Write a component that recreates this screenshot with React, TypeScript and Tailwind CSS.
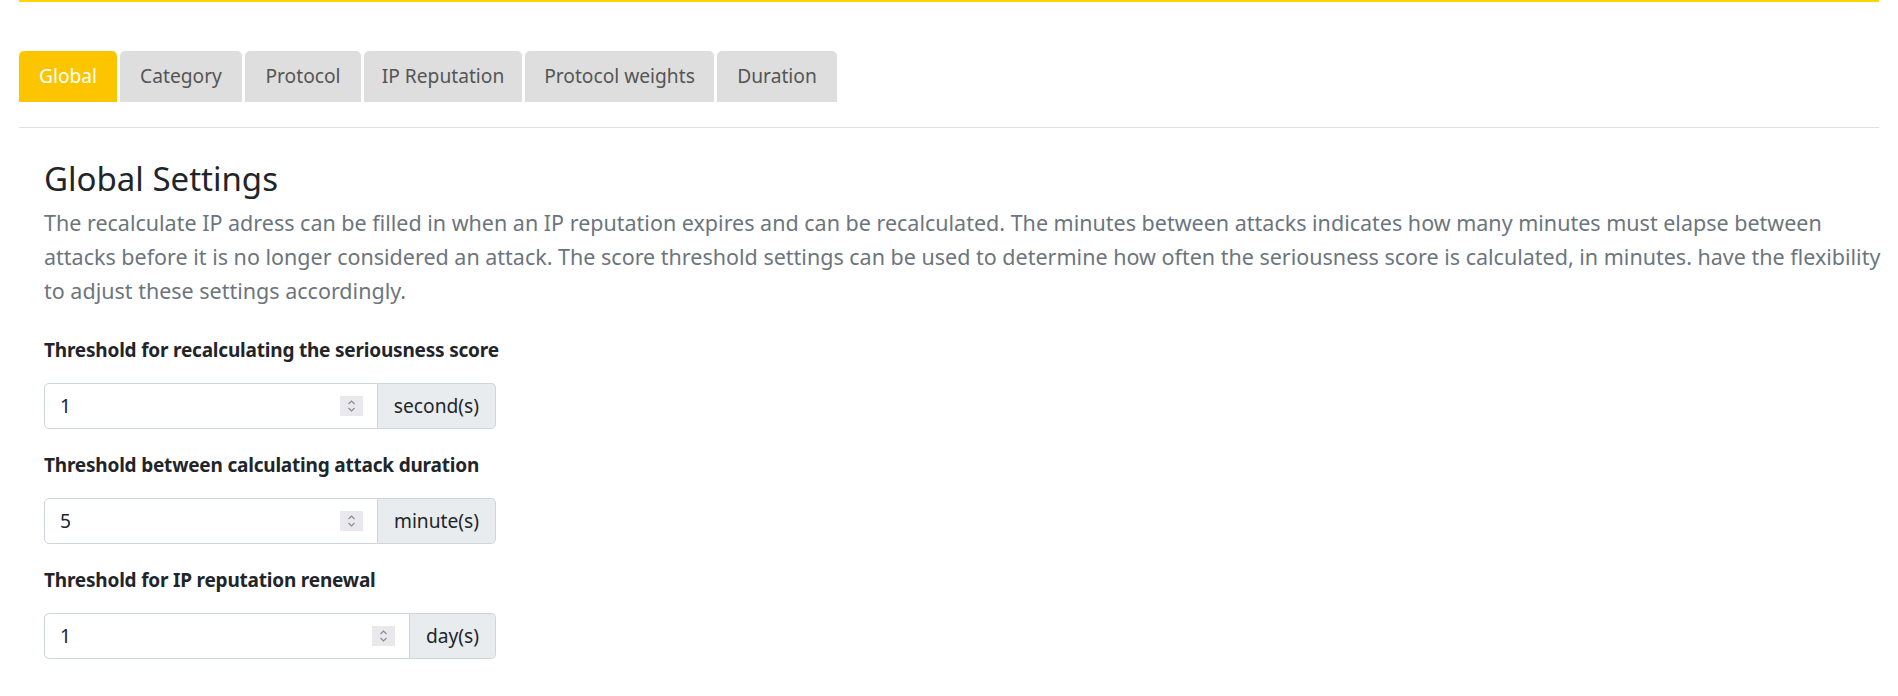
import React from "react";

const tabs = [
  { label: "Global", w: "w-[98px]", active: true },
  { label: "Category", w: "w-[122px]" },
  { label: "Protocol", w: "w-[116px]" },
  { label: "IP Reputation", w: "w-[158px]" },
  { label: "Protocol weights", w: "w-[189px]" },
  { label: "Duration", w: "w-[120px]" },
];

function Spinner() {
  return (
    <span className="flex h-[20px] w-[23px] items-center justify-center bg-[#e9e9ed]">
      <svg width="9" height="14" viewBox="0 0 9 14" fill="none" stroke="#8a8a8a" strokeWidth="1.1">
        <path d="M1.5 5 L4.5 2 L7.5 5" />
        <path d="M1.5 9 L4.5 12 L7.5 9" />
      </svg>
    </span>
  );
}

function Field({ label, value, unit, first }: { label: string; value: string; unit: string; first?: boolean }) {
  return (
    <div className={first ? "" : "mt-[22px]"}>
      <div className="h-[29px] text-[19px] font-bold leading-[29px] tracking-[-0.2px] text-[#212529]">{label}</div>
      <div className="mt-[18px] flex h-[46px] w-[452px]">
        <div className="flex flex-1 items-center rounded-l-[5px] border border-[#ced4da] bg-white pl-[15px] pr-[14px]">
          <span className="flex-1 text-[19.2px] text-[#212529]">{value}</span>
          <Spinner />
        </div>
        <div className="flex items-center rounded-r-[5px] border border-l-0 border-[#ced4da] bg-[#e9ecef] px-[16px] text-[19.2px] text-[#212529]">
          {unit}
        </div>
      </div>
    </div>
  );
}

export default function App() {
  return (
    <div className="min-h-[696px] bg-white px-[19px] font-['Noto_Sans','Open_Sans',sans-serif]">
      <div className="border-t-2 border-[#ffd400]">
        <div className="mt-[49px] flex gap-[3px]">
          {tabs.map((t) => (
            <div
              key={t.label}
              className={`flex h-[51px] items-center justify-center rounded-t-[5px] text-[19.2px] ${t.w} ${
                t.active ? "bg-[#fcc500] text-white" : "bg-[#dedede] text-[#555555]"
              }`}
            >
              {t.label}
            </div>
          ))}
        </div>
        <div className="mt-[25px] h-px bg-[#e0e0e0]" />
        <div className="px-[25px]">
          <h3 className="mt-[31px] text-[33px] leading-[40px] text-[#212529]">Global Settings</h3>
          <p className="mt-[7px] text-[21.5px] leading-[34px] text-[#6c757d]">
            <span className="block whitespace-nowrap">
              The recalculate IP adress can be filled in when an IP reputation expires and can be recalculated. The minutes between attacks indicates how many minutes must elapse between
            </span>
            <span className="block whitespace-nowrap">
              attacks before it is no longer considered an attack. The score threshold settings can be used to determine how often the seriousness score is calculated, in minutes. have the flexibility
            </span>
            <span className="block whitespace-nowrap">to adjust these settings accordingly.</span>
          </p>
          <div className="mt-[28px]">
            <Field first label="Threshold for recalculating the seriousness score" value="1" unit="second(s)" />
            <Field label="Threshold between calculating attack duration" value="5" unit="minute(s)" />
            <Field label="Threshold for IP reputation renewal" value="1" unit="day(s)" />
          </div>
        </div>
      </div>
    </div>
  );
}
